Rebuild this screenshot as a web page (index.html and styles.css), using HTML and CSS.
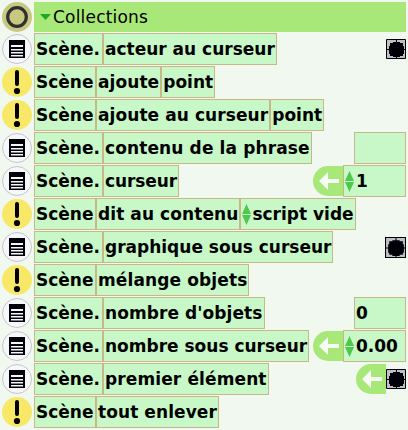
FILE: index.html
```
<!DOCTYPE html>
<html lang="fr">
<head>
  <meta charset="UTF-8">
  <title>Collections</title>
  <link rel="stylesheet" href="styles.css">
</head>
<body>
  <!-- SHARED ICONS -->
  <svg class="icon-defs" width="0" height="0">
    <symbol id="menu" viewBox="0 0 30 30">
      <circle cx="15" cy="15" r="14.5" fill="#f7f6fb" stroke="#c4c4c8"/>
      <path fill="#000008" d="M7 6h16v18H7z"/>
      <path fill="#f7f6fb" d="M9 11h12v2H9zM9 15h12v1.500H9zM9 18h12v1.500H9zM9 21h12v1.500H9z"/>
    </symbol>
    <symbol id="run" viewBox="0 0 30 30">
      <circle cx="15" cy="15" r="15" fill="#f8e868"/>
      <path stroke="#000" stroke-width="4" stroke-linecap="round" d="M15 5v12"/>
      <circle cx="15" cy="24" r="3.1"/>
    </symbol>
    <symbol id="assign" viewBox="0 0 30 30">
      <path fill="#a8e878" d="M30 0H15a15 15 0 0 0 0 30h15z"/>
      <path fill="#f7fbf5" d="M6 15l9-9v7h11v4H15v7z"/>
    </symbol>
    <symbol id="spin" viewBox="0 0 9 21">
      <path fill="#50c850" d="M4.500 0L9 10H0zM0 11h9L4.500 21z"/>
    </symbol>
    <symbol id="dot" viewBox="0 0 20 20">
      <path fill="#c0c0c4" stroke="#000008" d="M.5.5h19v19H.5z"/>
      <path stroke="#000008" d="M10.500 0v20M0 10.500h20"/>
      <path fill="#000008" d="M7 3h7v1h3v3h1v8h-1v2h-3v1H7v-1H4v-2H3V7h1V4h3z"/>
    </symbol>
  </svg>

  <div class="viewer">
    <!-- HEADER -->
    <div class="row header">
      <svg class="icon" viewBox="0 0 30 30">
        <circle cx="15" cy="15" r="15" fill="#c8c880"/>
        <circle cx="15" cy="15" r="9.300" fill="none" stroke="#303030" stroke-width="3.200"/>
      </svg>
      <div class="title">
        <svg class="arrow" width="11" height="6" viewBox="0 0 11 6"><path fill="#20a820" d="M0 0h11L5.500 6z"/></svg>
        <span>Collections</span>
      </div>
    </div>

    <!-- TILES -->
    <div class="row">
      <svg class="icon"><use href="#menu"/></svg>
      <div class="tile getter">Scène.</div>
      <div class="tile">acteur au curseur</div>
      <div class="value"><svg class="dot"><use href="#dot"/></svg></div>
    </div>
    <div class="row">
      <svg class="icon"><use href="#run"/></svg>
      <div class="tile command">Scène</div>
      <div class="tile loose">ajoute</div>
      <div class="tile">point</div>
    </div>
    <div class="row">
      <svg class="icon"><use href="#run"/></svg>
      <div class="tile command">Scène</div>
      <div class="tile loose">ajoute au curseur</div>
      <div class="tile">point</div>
    </div>
    <div class="row">
      <svg class="icon"><use href="#menu"/></svg>
      <div class="tile getter">Scène.</div>
      <div class="tile looser">contenu de la phrase</div>
      <div class="value"><div class="tile text"></div></div>
    </div>
    <div class="row">
      <svg class="icon"><use href="#menu"/></svg>
      <div class="tile getter">Scène.</div>
      <div class="tile tight">curseur</div>
      <div class="value">
        <svg class="assign"><use href="#assign"/></svg>
        <div class="tile number"><svg class="spin"><use href="#spin"/></svg>1</div>
      </div>
    </div>
    <div class="row">
      <svg class="icon"><use href="#run"/></svg>
      <div class="tile command">Scène</div>
      <div class="tile loose">dit au contenu</div>
      <div class="tile"><svg class="spin"><use href="#spin"/></svg>script vide</div>
    </div>
    <div class="row">
      <svg class="icon"><use href="#menu"/></svg>
      <div class="tile getter">Scène.</div>
      <div class="tile">graphique sous curseur</div>
      <div class="value"><svg class="dot dot-large"><use href="#dot"/></svg></div>
    </div>
    <div class="row">
      <svg class="icon"><use href="#run"/></svg>
      <div class="tile command">Scène</div>
      <div class="tile looser">mélange objets</div>
    </div>
    <div class="row">
      <svg class="icon"><use href="#menu"/></svg>
      <div class="tile getter">Scène.</div>
      <div class="tile loose">nombre d'objets</div>
      <div class="value"><div class="tile text">0</div></div>
    </div>
    <div class="row">
      <svg class="icon"><use href="#menu"/></svg>
      <div class="tile getter">Scène.</div>
      <div class="tile">nombre sous curseur</div>
      <div class="value">
        <svg class="assign"><use href="#assign"/></svg>
        <div class="tile number"><svg class="spin"><use href="#spin"/></svg>0.00</div>
      </div>
    </div>
    <div class="row">
      <svg class="icon"><use href="#menu"/></svg>
      <div class="tile getter">Scène.</div>
      <div class="tile looser">premier élément</div>
      <div class="value">
        <svg class="assign"><use href="#assign"/></svg>
        <svg class="dot"><use href="#dot"/></svg>
      </div>
    </div>
    <div class="row">
      <svg class="icon"><use href="#run"/></svg>
      <div class="tile command">Scène</div>
      <div class="tile loose">tout enlever</div>
    </div>
  </div>
</body>
</html>
```
FILE: styles.css
```
* {
  box-sizing: border-box;
}

body {
  margin: 0;
  background: #f0f8f0;
  font-family: "DejaVu Sans", sans-serif;
  font-size: 17px;
  color: #000;
}

.icon-defs {
  display: block;
}

.viewer {
  display: flex;
  flex-direction: column;
  gap: 1px;
  width: 408px;
  height: 430px;
  padding: 2px 2px 0;
}

/* ROWS */
.row {
  display: flex;
  flex: none;
  align-items: center;
  height: 32px;
}

.header {
  height: 30px;
}

.icon {
  flex: none;
  width: 30px;
  height: 30px;
  margin-right: 2px;
}

.title {
  display: flex;
  flex: 1;
  align-items: center;
  gap: 2px;
  height: 30px;
  padding-left: 6px;
  background: #a8e878;
  letter-spacing: 0.2px;
}

/* TILES */
.tile {
  display: flex;
  flex: none;
  align-items: center;
  height: 32px;
  padding: 0 1px;
  border: 1px solid #c8b888;
  background: #c8f8c8;
  font-weight: bold;
  white-space: nowrap;
}

.getter {
  width: 69px;
}

.command {
  width: 62px;
}

.loose {
  letter-spacing: 0.08px;
}

.looser {
  letter-spacing: 0.12px;
}

.tight {
  letter-spacing: -0.1px;
}

.spin {
  flex: none;
  width: 9px;
  height: 21px;
  margin-right: 1px;
}

/* VALUES - RIGHT ALIGNED */
.value {
  display: flex;
  align-items: center;
  margin-left: auto;
}

.text {
  width: 52px;
}

.number {
  width: 63px;
}

.number .spin {
  margin-right: 2px;
}

.assign {
  width: 30px;
  height: 30px;
}

.dot {
  width: 20px;
  height: 20px;
}

.dot-large {
  width: 21px;
  height: 21px;
}
```
